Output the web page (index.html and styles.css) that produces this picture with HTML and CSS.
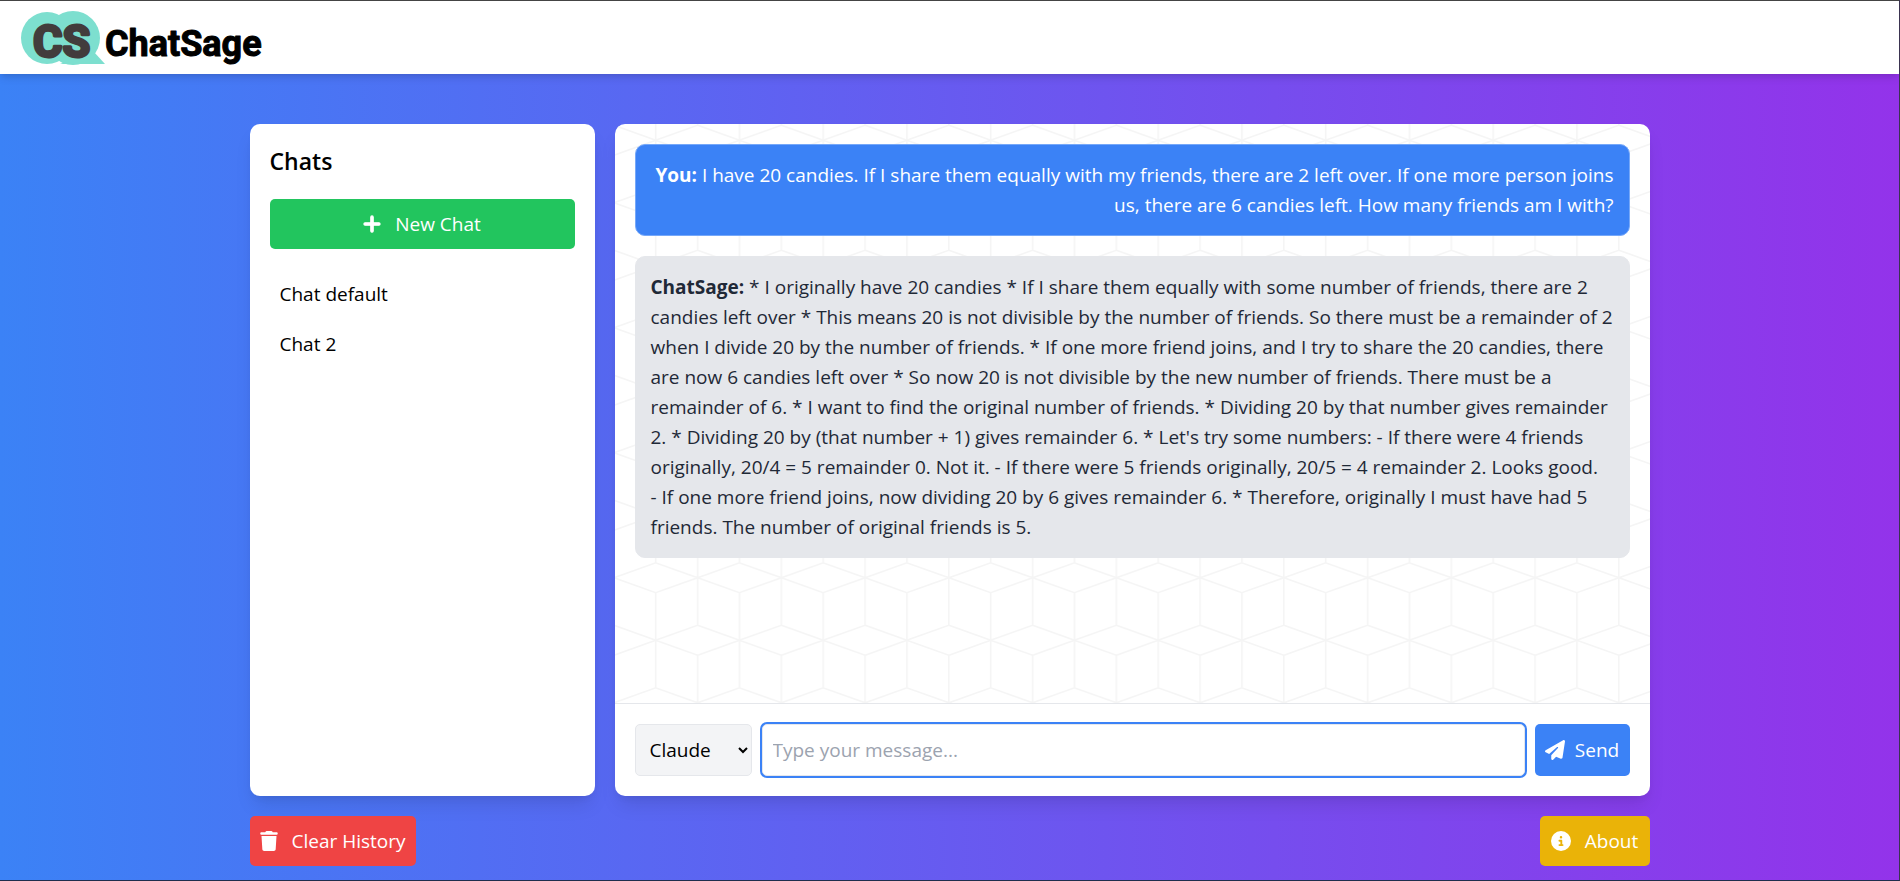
FILE: index.html
```html
<!DOCTYPE html>
<html lang="en">
<head>
<meta charset="utf-8">
<title>ChatSage</title>
<meta name="viewport" content="width=device-width, initial-scale=1">
<link rel="stylesheet" href="styles.css">
</head>
<body>
<header class="topbar">
  <svg class="logo" width="245" height="56" viewBox="0 0 245 56" role="img" aria-label="ChatSage">
    <g fill="#7ddfcf">
      <circle cx="27" cy="28" r="26"/>
      <circle cx="53" cy="28" r="27"/>
      <path d="M40 54 H85 L74 42 Z"/>
    </g>
    <text class="logo-mark" x="13" y="47">CS</text>
    <text class="logo-word" x="85" y="46">ChatSage</text>
  </svg>
</header>
<main class="page">
  <div class="panels">
    <aside class="sidebar">
      <h2 class="sidebar-title">Chats</h2>
      <button class="btn btn-new" type="button">
        <svg class="icon icon-plus" width="18" height="20" viewBox="0 0 448 512" aria-hidden="true"><path d="M256 80c0-17.700-14.300-32-32-32s-32 14.300-32 32V224H48c-17.700 0-32 14.300-32 32s14.300 32 32 32H192V432c0 17.700 14.300 32 32 32s32-14.300 32-32V288H400c17.700 0 32-14.300 32-32s-14.300-32-32-32H256V80z"/></svg>
        New Chat
      </button>
      <ul class="chat-list">
        <li><a class="chat-link" href="#default">Chat default</a></li>
        <li><a class="chat-link" href="#chat-2">Chat 2</a></li>
      </ul>
    </aside>
    <section class="chat" aria-label="Conversation">
      <div class="messages">
        <svg class="pattern" aria-hidden="true">
          <defs>
            <pattern id="cubes" width="67" height="100" patternUnits="userSpaceOnUse" patternTransform="scale(1.25)">
              <path d="M-34.500 13 L-1 1 L32.500 13 L-1 25 Z M32.500 13 L66 1 L99.500 13 L66 25 Z M-1 63 L32.500 51 L66 63 L32.500 75 Z M66 63 L99.500 51 M66 63 L99.500 75 M66 25 V101 M66 -1 V1 M32.500 -1 V51 M32.500 75 V101" fill="none" stroke="#f5f5f5" stroke-width="1.300"/>
            </pattern>
          </defs>
          <rect width="100%" height="100%" fill="url(#cubes)"/>
        </svg>
        <p class="message message-user"><strong>You:</strong> I have 20 candies. If I share them equally with my friends, there are 2 left over. If one more person joins us, there are 6 candies left. How many friends am I with?</p>
        <p class="message message-bot"><strong>ChatSage:</strong> * I originally have 20 candies * If I share them equally with some number of friends, there are 2 candies left over * This means 20 is not divisible by the number of friends. So there must be a remainder of 2 when I divide 20 by the number of friends. * If one more friend joins, and I try to share the 20 candies, there are now 6 candies left over * So now 20 is not divisible by the new number of friends. There must be a remainder of 6. * I want to find the original number of friends. * Dividing 20 by that number gives remainder 2. * Dividing 20 by (that number + 1) gives remainder 6. * Let's try some numbers: - If there were 4 friends originally, 20/4 = 5 remainder 0. Not it. - If there were 5 friends originally, 20/5 = 4 remainder 2. Looks good. <span class="keep">- If one</span> more friend joins, now dividing 20 by 6 gives remainder 6. * Therefore, originally I must have had 5 friends. The number of original friends is 5.</p>
      </div>
      <form class="composer">
        <select class="model" aria-label="Model">
          <option>Claude</option>
        </select>
        <input class="prompt" type="text" placeholder="Type your message..." aria-label="Message">
        <button class="btn btn-send" type="button">
          <svg class="icon" width="20" height="20" viewBox="0 0 512 512" aria-hidden="true"><path d="M498.100 5.600c10.100 7 15.400 19.100 13.500 31.200l-64 416c-1.500 9.700-7.400 18.200-16 23s-18.900 5.400-28 1.600L284 427.700l-68.500 74.100c-8.900 9.700-22.900 12.900-35.200 8.100S160 493.200 160 480V396.400c0-4 1.500-7.800 4.200-10.700L331.800 202.800c5.800-6.300 5.600-16-.4-22s-15.700-6.400-22-.7L106 360.800 17.700 316.600C7.100 311.300 .3 300.700 0 288.900s5.900-22.800 16.100-28.700l448-256c10.700-6.100 23.900-5.500 34 1.400z"/></svg>
          Send
        </button>
      </form>
    </section>
  </div>
  <div class="actions">
    <button class="btn btn-clear" type="button">
      <svg class="icon" width="18" height="20" viewBox="0 0 448 512" aria-hidden="true"><path d="M135.200 17.700L128 32H32C14.300 32 0 46.300 0 64S14.300 96 32 96H416c17.700 0 32-14.300 32-32s-14.300-32-32-32H320l-7.200-14.300C307.400 6.800 296.300 0 284.200 0H163.800c-12.100 0-23.200 6.800-28.600 17.700zM416 128H32L53.200 467c1.600 25.300 22.600 45 47.900 45H346.900c25.300 0 46.300-19.700 47.900-45L416 128z"/></svg>
      Clear History
    </button>
    <button class="btn btn-about" type="button">
      <svg class="icon" width="20" height="20" viewBox="0 0 512 512" aria-hidden="true"><path d="M256 512A256 256 0 1 0 256 0a256 256 0 1 0 0 512zM216 336h24V272H216c-13.300 0-24-10.700-24-24s10.700-24 24-24h48c13.300 0 24 10.700 24 24v88h8c13.300 0 24 10.700 24 24s-10.700 24-24 24H216c-13.300 0-24-10.700-24-24s10.700-24 24-24zm40-208a32 32 0 1 1 0 64 32 32 0 1 1 0-64z"/></svg>
      About
    </button>
  </div>
</main>
</body>
</html>
```

FILE: styles.css
```css
*, *::before, *::after { box-sizing: border-box; }

body {
  margin: 0;
  min-height: 100vh;
  display: flex;
  flex-direction: column;
  font-family: "Open Sans", "Noto Sans", sans-serif;
  font-size: 19px;
  line-height: 30px;
  color: #000;
  background: linear-gradient(to right, #3b82f6, #9333ea);
  border-right: 1px solid #3a3350;
  border-bottom: 1px solid #1f2d4d;
}

h2, p, ul { margin: 0; padding: 0; }
ul { list-style: none; }
button, input, select { font: inherit; }

.topbar {
  display: flex;
  align-items: center;
  padding: 9px 20px 8px;
  background: #fff;
  border-top: 1px solid #444;
  box-shadow: 0 5px 8px -1px rgba(0, 0, 0, 0.1), 0 2px 5px -2px rgba(0, 0, 0, 0.1);
}

.logo { display: block; overflow: visible; }

.logo-mark,
.logo-word {
  font-family: Roboto, sans-serif;
  font-weight: 700;
  stroke-linejoin: round;
}

.logo-mark { font-size: 45px; fill: #423c3c; stroke: #423c3c; stroke-width: 3px; }
.logo-word { font-size: 36px; fill: #000; stroke: #000; stroke-width: 1px; }

.page {
  flex: 1;
  display: flex;
  flex-direction: column;
  gap: 20px;
  width: 100%;
  max-width: 1440px;
  margin: 0 auto;
  padding: 50px 20px 14px;
}

.panels {
  flex: 1;
  display: grid;
  grid-template-columns: minmax(0, 1fr) minmax(0, 3fr);
  gap: 20px;
}

.sidebar,
.chat {
  background: #fff;
  border-radius: 10px;
  box-shadow: 0 12px 19px -4px rgba(0, 0, 0, 0.1), 0 5px 8px -5px rgba(0, 0, 0, 0.1);
}

.sidebar { padding: 20px; }

.sidebar-title {
  margin-bottom: 20px;
  font-size: 23px;
  font-weight: 600;
  line-height: 35px;
}

.btn {
  display: inline-flex;
  align-items: center;
  justify-content: center;
  gap: 14px;
  min-height: 50px;
  padding: 10px;
  border: 0;
  border-radius: 5px;
  color: #fff;
  cursor: pointer;
}

.icon { flex: none; fill: currentColor; }
.icon-plus { stroke: currentColor; stroke-width: 28px; stroke-linejoin: round; }

.btn-new { width: 100%; margin-bottom: 20px; background: #22c55e; }
.btn-send { gap: 10px; min-width: 95px; background: #3b82f6; }
.btn-clear { background: #ef4444; }
.btn-about { min-width: 110px; background: #eab308; }

.chat-link {
  display: block;
  padding: 10px;
  border-radius: 5px;
  color: #000;
  text-decoration: none;
}

.chat {
  display: flex;
  flex-direction: column;
  overflow: hidden;
}

.messages {
  position: relative;
  flex: 1;
  display: flex;
  flex-direction: column;
  gap: 20px;
  padding: 20px;
}

.pattern {
  position: absolute;
  inset: 0;
  width: 100%;
  height: 100%;
}

.message {
  position: relative;
  padding: 15px;
  border: 1px solid #e5e7eb;
  border-radius: 10px;
}

.message-user {
  border-color: #76a8f9;
  background: #3b82f6;
  color: #fff;
  text-align: right;
}

.message-bot { background: #e5e7eb; color: #1f2937; }

.keep { white-space: nowrap; }

.composer {
  display: flex;
  gap: 10px;
  padding: 20px;
  border-top: 1px solid #e5e7eb;
}

.model,
.prompt {
  min-height: 52px;
  border: 1px solid #e5e7eb;
  border-radius: 5px;
  color: #000;
}

.model { width: 117px; padding: 10px; background: #f3f4f6; }

.prompt {
  flex: 1;
  min-width: 0;
  padding: 10px;
  background: #fff;
  outline: 0;
  box-shadow: 0 0 0 2px #3b82f6;
}

.prompt::placeholder { color: #9ca3af; opacity: 1; }

.actions { display: flex; justify-content: space-between; }
```
